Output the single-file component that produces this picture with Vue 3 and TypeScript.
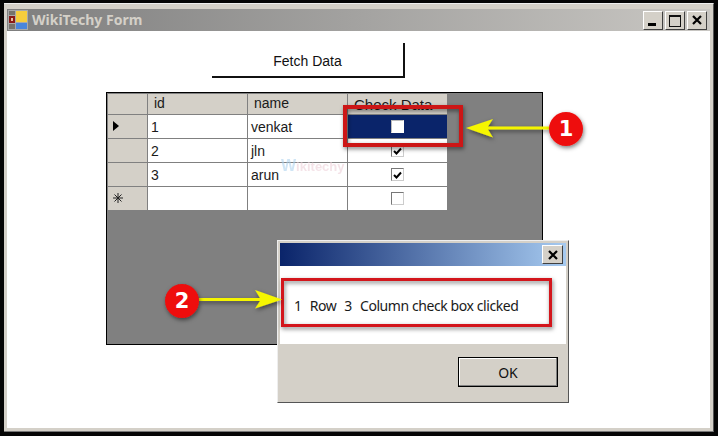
<script setup lang="ts">
interface Row {
  id: string
  name: string
  checked: boolean
  marker: 'current' | 'new' | ''
}

const rows: Row[] = [
  { id: '1', name: 'venkat', checked: false, marker: 'current' },
  { id: '2', name: 'jln', checked: true, marker: '' },
  { id: '3', name: 'arun', checked: true, marker: '' },
  { id: '', name: '', checked: false, marker: 'new' },
]
</script>

<template>
  <div class="screen">
    <div class="window">
      <header class="titlebar">
        <svg class="app-icon" width="20" height="20" viewBox="0 0 20 20">
          <rect x="0" y="0" width="20" height="20" fill="#a9a9a9" />
          <rect x="1" y="1" width="6" height="4" fill="#77736c" />
          <rect x="1" y="6" width="6" height="7" fill="#8c1a16" />
          <rect x="3" y="8" width="2" height="3" fill="#e8c0a0" />
          <rect x="1" y="14" width="6" height="5" fill="#77736c" />
          <rect x="8" y="1" width="11" height="11" fill="#f6cd3c" />
          <rect x="8" y="13" width="11" height="6" fill="#4a86dc" />
        </svg>
        <span class="title">WikiTechy Form</span>
        <div class="controls">
          <button class="ctl" type="button">
            <svg width="12" height="12" viewBox="0 0 12 12"><rect x="1" y="9" width="8" height="3" fill="#000" /></svg>
          </button>
          <button class="ctl" type="button">
            <svg width="14" height="13" viewBox="0 0 14 13"><path d="M1 1.500h12M1 2.500h12M1.500 1v11.500M12.500 1v11.500M1 12.500h12" stroke="#111" fill="none" /></svg>
          </button>
          <button class="ctl" type="button">
            <svg width="12" height="12" viewBox="0 0 12 12"><path d="M2 2l8 8M10 2l-8 8" stroke="#000" stroke-width="2.2" /></svg>
          </button>
        </div>
      </header>

      <main class="form">
        <button class="fetch" type="button">Fetch Data</button>

        <section class="grid">
          <div class="row head">
            <div class="cell rh"></div>
            <div class="cell c-id">id</div>
            <div class="cell c-name">name</div>
            <div class="cell c-check head-check">Check Data</div>
          </div>
          <div v-for="(row, i) in rows" :key="i" class="row">
            <div class="cell rh">
              <svg v-if="row.marker === 'current'" width="6" height="10" viewBox="0 0 6 10"><path d="M0 0l6 5-6 5z" fill="#000" /></svg>
              <svg v-else-if="row.marker === 'new'" width="10" height="10" viewBox="0 0 10 10"><path d="M5 0v10M0 5h10M1.500 1.500l7 7M8.500 1.500l-7 7" stroke="#222" fill="none" /></svg>
            </div>
            <div class="cell c-id">{{ row.id }}</div>
            <div class="cell c-name">
              {{ row.name }}
              <span v-if="i === 1" class="mark"><b class="mark-w">W</b>ikitechy</span>
            </div>
            <div class="cell c-check" :class="{ selected: i === 0 }">
              <span class="box" :class="{ blank: i === 0 }">
                <svg v-if="row.checked" width="9" height="8" viewBox="0 0 9 8"><path d="M1 4l2.500 2.500L8 1.500" stroke="#000" stroke-width="2" fill="none" /></svg>
              </span>
            </div>
          </div>
        </section>
      </main>
    </div>

    <aside class="dialog">
      <div class="dlg-title">
        <button class="ctl dlg-close" type="button">
          <svg width="12" height="12" viewBox="0 0 12 12"><path d="M2 2l8 8M10 2l-8 8" stroke="#000" stroke-width="2.2" /></svg>
        </button>
      </div>
      <div class="dlg-body"><span class="lead">1&nbsp; Row&nbsp; 3&nbsp; </span>Column check box clicked</div>
      <div class="dlg-foot">
        <button class="ok" type="button">OK</button>
      </div>
    </aside>

    <svg class="notes" width="718" height="436" viewBox="0 0 718 436">
      <defs>
        <filter id="soft" x="-20%" y="-30%" width="140%" height="160%">
          <feDropShadow dx="1" dy="2" stdDeviation="2" flood-color="#000" flood-opacity="0.5" />
        </filter>
      </defs>
      <g filter="url(#soft)">
        <rect x="345" y="107" width="116" height="38" fill="none" stroke="#cc1419" stroke-width="4" />
        <rect x="282.500" y="279.500" width="268" height="46" fill="none" stroke="#d3141c" stroke-width="3" />
      </g>
      <g filter="url(#soft)" fill="#f5f500">
        <path d="M466 128l27-9-5 7.500h62v3h-62l5 8z" />
        <path d="M282 299.500l-27 9 5-7.500h-61v-3h61l-5-8z" />
      </g>
      <g filter="url(#soft)">
        <circle cx="566" cy="129" r="17" fill="#ee0a0a" />
        <circle cx="182" cy="301" r="17" fill="#ee0a0a" />
      </g>
      <text x="566" y="136" class="num">1</text>
      <text x="182" y="308" class="num">2</text>
    </svg>
  </div>
</template>

<style>
html,
body {
  margin: 0;
  background: #000;
}
</style>

<style scoped>
.screen {
  position: relative;
  width: 718px;
  height: 436px;
  box-sizing: border-box;
  padding: 3px 4px 4px 4px;
  background: #050505;
  overflow: hidden;
  font-family: 'Liberation Sans', Arial, sans-serif;
}
.window {
  height: 429px;
  box-sizing: border-box;
  display: flex;
  flex-direction: column;
  padding: 5px 3px 3px 3px;
  background: #d4d0c8;
  border-bottom: 1px solid #777;
  border-right: 1px solid #555;
  border-top: 1px solid #eee;
}
.titlebar {
  height: 22px;
  flex: none;
  display: flex;
  align-items: center;
  gap: 4px;
  padding: 0 3px 0 1px;
  background: linear-gradient(90deg, #7e7e7e, #c9c7c3);
}
.app-icon {
  flex: none;
}
.title {
  color: #d4d0c8;
  font: bold 14px 'Noto Sans', Tahoma, sans-serif;
  line-height: 22px;
}
.controls {
  margin-left: auto;
  display: flex;
  gap: 2px;
}
.ctl {
  width: 20px;
  height: 19px;
  padding: 0;
  display: flex;
  align-items: center;
  justify-content: center;
  background: #d4d0c8;
  border: 1px solid;
  border-color: #fff #404040 #404040 #fff;
}
.form {
  flex: 1;
  background: #fff;
  display: flex;
  flex-direction: column;
  align-items: flex-start;
}
.fetch {
  margin: 12px 0 0 205px;
  width: 193px;
  height: 35px;
  padding: 2px 0 0;
  box-sizing: border-box;
  background: #fff;
  border: 0;
  border-right: 2px solid #111;
  border-bottom: 2px solid #111;
  color: #111;
  font: 14px 'Liberation Sans', Arial, sans-serif;
}
.grid {
  margin: 14px 0 0 99px;
  width: 437px;
  height: 253px;
  box-sizing: border-box;
  padding-top: 1px;
  background: #808080;
  border: 1px solid #000;
  color: #1a1a1a;
  font-size: 14px;
}
.row {
  display: flex;
  height: 24px;
  margin-left: 1px;
  box-sizing: border-box;
}
.row.head {
  height: 21px;
}
.cell {
  box-sizing: border-box;
  background: #fff;
  border-right: 1px solid #808080;
  border-bottom: 1px solid #808080;
  padding: 4px 0 0 3px;
  line-height: 17px;
  position: relative;
  white-space: nowrap;
}
.rh {
  width: 40px;
  flex: none;
  background: #d4d0c8;
  padding: 6px 0 0 5px;
  display: flex;
  align-items: flex-start;
}
.c-id,
.c-name {
  width: 100px;
  flex: none;
}
.c-check {
  width: 99px;
  flex: none;
  border-right: 0;
  display: flex;
  align-items: center;
  justify-content: center;
  padding: 0;
}
.head .cell {
  background: #d4d0c8;
  padding-top: 1px;
  padding-left: 6px;
}
.head .rh {
  padding: 0;
}
.head-check.cell {
  padding: 0 0 0 6px;
  align-items: flex-start;
  justify-content: flex-start;
  line-height: 22px;
  font-size: 15px;
}
.selected {
  background: #0a246a;
}
.box {
  width: 11px;
  height: 11px;
  display: flex;
  align-items: center;
  justify-content: center;
  background: #fff;
  border: 1px solid;
  border-color: #777 #ccc #ccc #777;
}
.box.blank {
  border-color: #bbb #fff #fff #bbb;
}
.mark {
  position: absolute;
  left: 33px;
  top: 18px;
  z-index: 1;
  color: #eccdd6;
  opacity: 0.55;
  font-size: 13px;
  font-weight: bold;
}
.mark-w {
  color: #a9d0ee;
  font-size: 16px;
}
.dialog {
  position: absolute;
  left: 277px;
  top: 240px;
  width: 292px;
  height: 163px;
  box-sizing: border-box;
  padding: 2px 2px 2px 2px;
  display: flex;
  flex-direction: column;
  background: #d4d0c8;
  border: 1px solid;
  border-color: #eee #555 #555 #eee;
}
.dlg-title {
  height: 23px;
  flex: none;
  display: flex;
  align-items: center;
  justify-content: flex-end;
  padding-right: 3px;
  background: linear-gradient(90deg, #0a246a, #a6caf0);
}
.dlg-close {
  width: 21px;
  height: 19px;
}
.dlg-body {
  height: 78px;
  flex: none;
  box-sizing: border-box;
  background: #fff;
  padding: 30px 0 0 14px;
  color: #1a1a1a;
  font: 14px/19px 'Noto Sans', Tahoma, sans-serif;
  letter-spacing: -0.42px;
}
.lead {
  word-spacing: 0.8px;
}
.dlg-foot {
  flex: 1;
  display: flex;
  justify-content: flex-end;
  align-items: flex-start;
  padding: 13px 8px 0 0;
}
.ok {
  width: 100px;
  height: 30px;
  padding: 0;
  background: #d4d0c8;
  border: 1px solid #000;
  box-shadow: inset -1px -1px 0 #808080, inset 1px 1px 0 #fff;
  color: #111;
  font: 14px 'Noto Sans', Tahoma, sans-serif;
}
.notes {
  position: absolute;
  left: 0;
  top: 0;
  pointer-events: none;
}
.num {
  fill: #fff;
  font: bold 21px 'DejaVu Sans', sans-serif;
  text-anchor: middle;
}
</style>
